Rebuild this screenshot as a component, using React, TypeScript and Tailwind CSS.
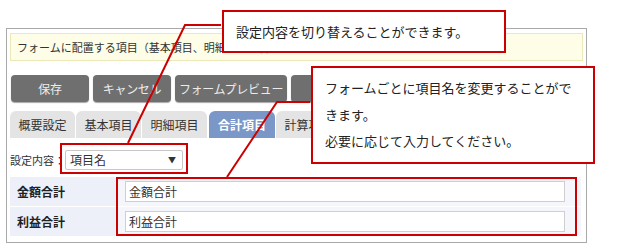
import React from 'react';

const jp = { fontFamily: '"Noto Sans CJK JP", "Noto Sans", sans-serif' };

const App: React.FC = () => {
  const buttons = [
    { label: '保存', w: 'w-[78px]' },
    { label: 'キャンセル', w: 'w-[78px]' },
    { label: 'フォームプレビュー', w: 'w-[112px]' },
    { label: '', w: 'w-[78px]' },
  ];
  const tabs = ['概要設定', '基本項目', '明細項目', '合計項目', '計算項目'];
  const rows = ['金額合計', '利益合計'];

  return (
    <div className="relative w-[640px] h-[248px] bg-white overflow-hidden text-[#333]" style={jp}>
      {/* form panel */}
      <div className="ml-[6px] mt-[28px] w-[581px] h-[215px] border border-[#a9a9a9] px-[3px] pt-[4px]">
        <div className="h-[28px] border border-[#ece8b8] bg-[#fdfde8] pl-[6px] flex items-center text-[11px] whitespace-nowrap overflow-hidden">
          フォームに配置する項目（基本項目、明細項目、合計項目、計算項目）を設定します。
        </div>

        <div className="mt-[14px] flex gap-[4px] pl-[1px]">
          {buttons.map((b, i) => (
            <div
              key={i}
              className={`${b.w} h-[27px] shrink-0 rounded-[4px] bg-[#6f6f6f] shadow-[0_1px_1px_rgba(0,0,0,0.35)] flex items-center justify-center text-[12px] tracking-[-0.3px] whitespace-nowrap text-[#ececec]`}
            >
              {b.label}
            </div>
          ))}
        </div>

        <div className="mt-[9px] flex gap-[1px]">
          {tabs.map((t, i) => (
            <div
              key={t}
              className={
                i === 3
                  ? 'w-[66px] h-[27px] shrink-0 rounded-t-[6px] bg-[#7b97c8] flex items-center justify-center text-[12px] font-bold text-white ml-[1px]'
                  : 'w-[65px] h-[27px] shrink-0 rounded-t-[6px] bg-[#e4e4e4] flex items-center justify-center text-[12px] text-[#333]'
              }
            >
              {t}
            </div>
          ))}
        </div>

        <div className="mt-[12px] flex items-center h-[20px]">
          <span className="w-[55px] text-[11px] whitespace-nowrap">設定内容：</span>
          <div className="w-[118px] h-[20px] border border-[#c8c8c8] rounded-[2px] bg-white flex items-center justify-between pl-[4px] pr-[6px] text-[12px]">
            <span>項目名</span>
            <span className="text-[8px]">▼</span>
          </div>
        </div>

        <div className="mt-[7px] w-[571px]">
          {rows.map((r) => (
            <div key={r} className="flex h-[30px] border-b border-white">
              <div className="w-[105px] bg-[#edf0f9] flex items-center pl-[7px] text-[12px] font-bold text-[#222]">
                {r}
              </div>
              <div className="flex-1 bg-[#f5f5fc] flex items-center pl-[10px]">
                <div className="w-[440px] h-[21px] border border-[#cfcfcf] bg-white flex items-center pl-[3px] text-[12px]">
                  {r}
                </div>
              </div>
            </div>
          ))}
        </div>
      </div>

      {/* leader lines */}
      <svg className="absolute left-0 top-0 pointer-events-none" width="640" height="248">
        <polyline points="221,25 185,25 128,143" fill="none" stroke="#cc0000" strokeWidth="2" />
        <polyline points="310,102 277,102 227,177" fill="none" stroke="#cc0000" strokeWidth="2" />
      </svg>

      {/* highlight boxes */}
      <div className="absolute left-[60px] top-[143px] w-[128px] h-[31px] border-2 border-[#cc0000]" />
      <div className="absolute left-[116px] top-[177px] w-[461px] h-[59px] border-2 border-[#cc0000]" />

      {/* callouts */}
      <div className="absolute left-[222px] top-[10px] w-[284px] h-[43px] border-2 border-[#cc0000] bg-white flex items-center pl-[12px] text-[13px] text-[#222]">
        設定内容を切り替えることができます。
      </div>
      <div className="absolute left-[311px] top-[66px] w-[284px] h-[98px] border-2 border-[#cc0000] bg-white pl-[12px] pt-[7px] text-[13px] leading-[26.5px] text-[#222]">
        フォームごとに項目名を変更することがで
        <br />
        きます。
        <br />
        必要に応じて入力してください。
      </div>
    </div>
  );
};

export default App;
